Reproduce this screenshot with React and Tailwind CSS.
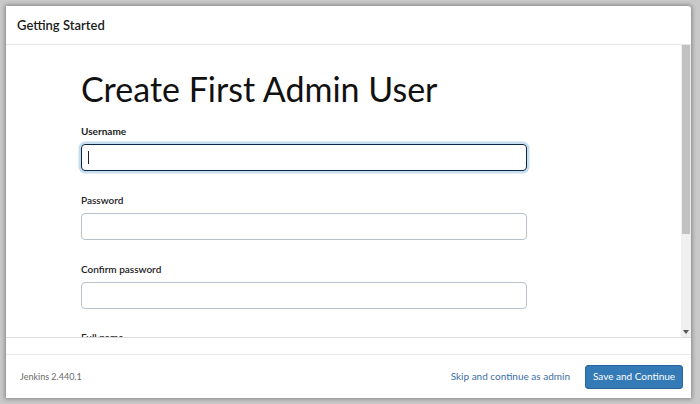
export default function App() {
  const font = { fontFamily: 'Lato, "Noto Sans", sans-serif' };
  return (
    <div className="w-[700px] h-[404px] bg-[#c9c9c9] pt-[6px] pl-[6px] pr-[9px] pb-[6px] overflow-hidden" style={font}>
      <div className="w-full h-full bg-white flex flex-col shadow-[0_0_4px_1px_rgba(0,0,0,0.35)] rounded-tr-[3px]">
        <div className="h-[39px] shrink-0 border-b border-[#e5e5e5] flex items-center pl-[11px] pt-[1px]">
          <span className="text-[13px] font-semibold text-[#1a1a1a]">Getting Started</span>
        </div>
        <div className="h-[292px] shrink-0 flex overflow-hidden">
          <div className="flex-1 overflow-hidden pl-[75px] pt-[23px]">
            <h1 className="text-[34px] leading-[41px] text-[#111] font-normal">Create First Admin User</h1>
            <div className="mt-[15px] flex flex-col">
              <label className="text-[10px] font-bold text-[#222] leading-[14px]">Username</label>
              <div className="mt-[6px] w-[446px] h-[27px] rounded-[4px] border-[1.5px] border-[#0b2744] shadow-[0_0_0_2.5px_#c6def0] flex items-center pl-[6px]">
                <div className="w-px h-[13px] bg-[#222]" />
              </div>
              <label className="mt-[22px] text-[10px] font-semibold text-[#222] leading-[14px]">Password</label>
              <div className="mt-[6px] w-[446px] h-[27px] rounded-[4px] border border-[#b9c2cc]" />
              <label className="mt-[22px] text-[10px] font-semibold text-[#222] leading-[14px]">Confirm password</label>
              <div className="mt-[6px] w-[446px] h-[27px] rounded-[4px] border border-[#b9c2cc]" />
              <label className="mt-[21px] text-[10px] font-semibold text-[#222] leading-[14px]">Full name</label>
            </div>
          </div>
          <div className="w-[10px] shrink-0 bg-[#f0f0f0] flex flex-col">
            <div className="h-[189px] bg-[#c1c1c1] mx-[1px]" />
            <div className="flex-1" />
            <div className="h-[10px] flex items-center justify-center">
              <svg width="6" height="4" viewBox="0 0 6 4"><path d="M0 0 L6 0 L3 4 Z" fill="#555" /></svg>
            </div>
          </div>
        </div>
        <div className="h-[18px] shrink-0 border-t border-[#dcdcdc] border-b border-b-[#e8e8e8]" />
        <div className="flex-1 flex items-center pl-[14px] pr-[8px]">
          <span className="text-[9px] text-[#6b6b6b]">Jenkins 2.440.1</span>
          <div className="flex-1" />
          <span className="text-[10px] text-[#3a6ea5] mr-[15px]">Skip and continue as admin</span>
          <button className="h-[24px] w-[98px] bg-[#337ab7] border border-[#2a649a] rounded-[3px] text-white text-[10px]">Save and Continue</button>
        </div>
      </div>
    </div>
  );
}
